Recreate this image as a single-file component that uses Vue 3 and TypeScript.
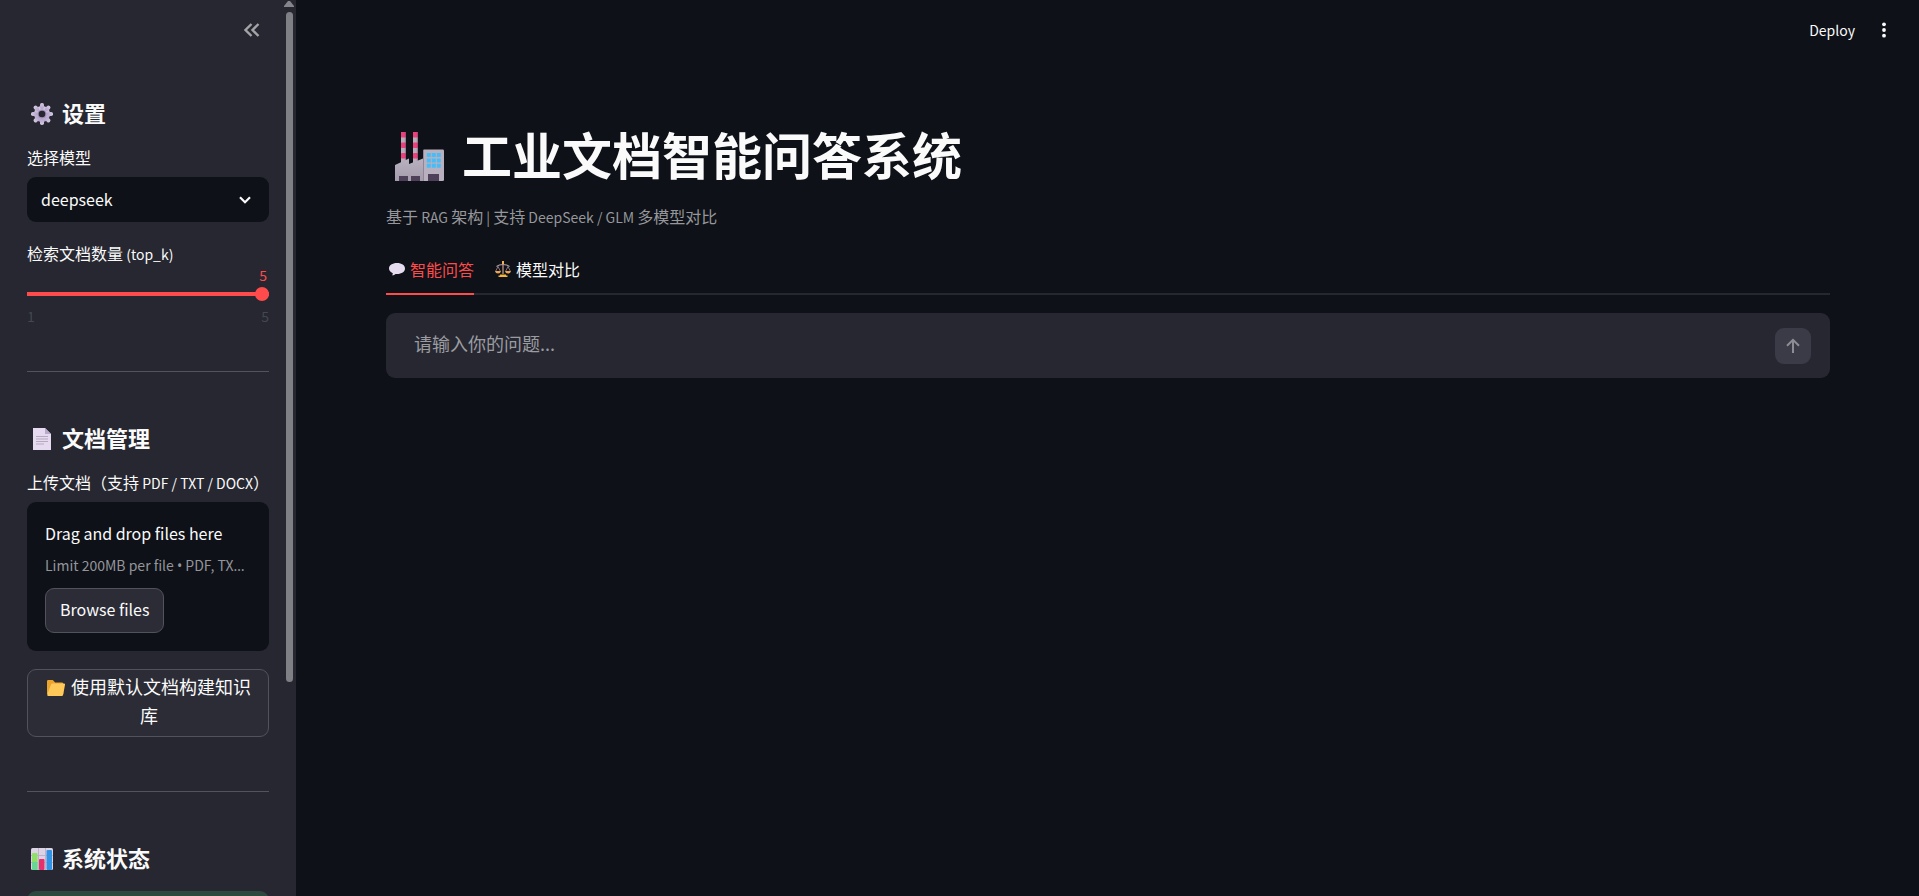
<script setup lang="ts">
import { ref } from 'vue'

const model = ref('deepseek')
const topK = ref(5)
const tab = ref(0)
const question = ref('')
</script>

<template>
  <div class="app">
    <aside class="sidebar">
      <div class="side-head">
        <button class="icon-btn" aria-label="Collapse sidebar">
          <svg width="16" height="14" viewBox="0 0 16 14" fill="none" stroke="#a3a4a8" stroke-width="2.4">
            <path d="M7.5 1 1.5 7l6 6M14.5 1l-6 6 6 6" />
          </svg>
        </button>
      </div>

      <section class="group settings">
        <h2>
          <svg class="emoji" viewBox="0 0 22 22">
            <defs>
              <linearGradient id="gear" x1="0" y1="0" x2="0" y2="1">
                <stop offset="0" stop-color="#d6cbe2" />
                <stop offset="1" stop-color="#b3a2cb" />
              </linearGradient>
            </defs>
            <g fill="url(#gear)">
              <circle cx="11" cy="11" r="8" />
              <rect v-for="a in 8" :key="a" x="9" y="0" width="4" height="6" rx="1.8" :transform="`rotate(${a * 45} 11 11)`" />
            </g>
            <circle cx="11" cy="11" r="4.6" fill="#a191b8" />
            <circle cx="11" cy="11" r="3.3" fill="#262730" />
          </svg>
          <span>设置</span>
        </h2>
        <label for="model">选择模型</label>
        <div class="select-wrap">
          <select id="model" v-model="model">
            <option>deepseek</option>
            <option>glm</option>
          </select>
          <svg class="chevron" width="12" height="8" viewBox="0 0 12 8" fill="none" stroke="#fafafa" stroke-width="2.2">
            <path d="M1 1.2 6 6.2l5-5" />
          </svg>
        </div>
        <label class="topk" for="topk">检索文档数量<span class="latin"> (top_k)</span></label>
        <output class="value" for="topk">{{ topK }}</output>
        <input id="topk" v-model.number="topK" type="range" min="1" max="5" />
        <div class="ticks"><span>1</span><span>5</span></div>
      </section>

      <hr />

      <section class="group">
        <h2>
          <svg class="emoji" viewBox="0 0 22 22">
            <path d="M2 0h12l6 6v16H2z" fill="#e5daf0" />
            <path d="M14 0v6h6z" fill="#b9a9cc" />
            <path d="M5 8.5h12M5 11h12M5 13.5h12M5 16h8" stroke="#b5a9c0" stroke-width="1" />
          </svg>
          <span>文档管理</span>
        </h2>
        <label for="browse">上传文档（支持<span class="latin"> PDF / TXT / DOCX</span>）</label>
        <div class="dropzone">
          <p class="drop-title">Drag and drop files here</p>
          <p class="drop-hint">Limit 200MB per file <span class="mark">•</span> PDF, TX<span class="mark">…</span></p>
          <button id="browse" class="btn browse">Browse files</button>
        </div>
        <button class="btn build">
          <svg class="folder" viewBox="0 0 18 16">
            <path d="M0 1.2Q0 0 1.2 0h4.6l2.4 2.4h6.6q1.4 0 1.4 1.4V14H0z" fill="#eba42c" />
            <path d="M4 4.6Q4.3 3.5 5.5 3.5H17q1.2 0 1 1.2l-1.8 9.8Q16 16 14.6 16H1.2Q0 16 .3 14.6z" fill="#ffc95a" />
          </svg>
          使用默认文档构建知识库
        </button>
      </section>

      <hr />

      <section class="group">
        <h2>
          <svg class="emoji" viewBox="0 0 22 22">
            <rect width="22" height="22" rx="1.5" fill="#dcd4e4" />
            <path d="M0 7.5h22M0 14.5h22M7.5 0v22M14.5 0v22" stroke="#bdb2c9" />
            <rect x="1" y="5" width="5.5" height="17" rx="1" fill="#90df68" />
            <path d="M1 14h5.5v8H1z" fill="#68d796" />
            <rect x="8" y="11" width="5.5" height="11" rx="1" fill="#e5306e" />
            <rect x="15.5" y="2" width="5.5" height="20" rx="1" fill="#3294e5" />
          </svg>
          <span>系统状态</span>
        </h2>
        <div class="status"></div>
      </section>

      <div class="scrollbar" aria-hidden="true">
        <svg width="10" height="6" viewBox="0 0 10 6"><path d="M4 0h2l4 5v1H0V5z" fill="#85868b" /></svg>
        <div class="thumb"></div>
      </div>
    </aside>

    <main class="main">
      <header class="toolbar">
        <button class="deploy">Deploy</button>
        <button class="icon-btn" aria-label="Menu">
          <svg width="4" height="16" viewBox="0 0 4 16" fill="#fafafa">
            <circle cx="2" cy="2.3" r="1.9" /><circle cx="2" cy="8" r="1.9" /><circle cx="2" cy="13.7" r="1.9" />
          </svg>
        </button>
      </header>

      <div class="content">
        <h1>
          <svg class="factory" viewBox="0 0 49 49">
            <defs>
              <linearGradient id="wall" x1="0" y1="0" x2="0" y2="1">
                <stop offset="0" stop-color="#b9b1c0" />
                <stop offset="1" stop-color="#a49cab" />
              </linearGradient>
            </defs>
            <g v-for="x in [6, 18]" :key="x">
              <rect :x="x" y="0" width="5" height="32" rx="1" fill="#b8aebb" />
              <rect v-for="y in [0, 10.5, 21]" :key="y" :x="x" :y="y" width="5" height="5.5" rx=".7" fill="#ef3f7b" />
              <rect :x="x + 3.8" y="0" width="1.2" height="32" fill="#5d405f" opacity=".4" />
            </g>
            <path d="M0 33 14 26.5V32l14-5.500V49H0z" fill="url(#wall)" />
            <rect x="28" y="17.5" width="21" height="31.5" rx="1.2" fill="#b8b0be" />
            <path d="M28.5 18v31" stroke="#8f8798" />
            <template v-for="c in 3" :key="c">
              <rect v-for="r in 3" :key="r" :x="26.8 + c * 5" :y="15.8 + r * 5.3" width="4" height="4" rx=".4" fill="#45bdf8" />
            </template>
            <path d="M4 49v-5h9v5zM16 49v-5h9v5zM33 49v-7h11v7z" fill="#4d4058" />
          </svg>
          <span>工业文档智能问答系统</span>
        </h1>
        <p class="caption">
          基于<span class="latin"> RAG </span>架构<span class="latin"> | </span>支持<span class="latin"> DeepSeek / GLM </span>多模型对比
        </p>

        <div class="tabs" role="tablist">
          <button role="tab" :class="{ active: tab === 0 }" :aria-selected="tab === 0" @click="tab = 0">
            <svg class="tab-emoji" viewBox="0 0 16 16">
              <path d="M8 2c4.7 0 8 2.3 8 5.5S12.7 13 8 13l-1.500-.1C5.500 14 4 14.500 3 14.200c.7-.6.9-1.300.8-2C1.500 11.200 0 9.500 0 7.500 0 4.300 3.300 2 8 2z" fill="#e5dcf0" />
            </svg>
            智能问答
          </button>
          <button role="tab" :class="{ active: tab === 1 }" :aria-selected="tab === 1" @click="tab = 1">
            <svg class="tab-emoji" viewBox="0 0 16 16" fill="none">
              <path d="M8 2v11" stroke="#c9a08a" stroke-width="1.2" />
              <path d="M1.5 5.5Q4 3.5 8 3.5t6.5 2" stroke="#b69a9d" stroke-width="1.2" />
              <path d="M3 5.500.6 10.300M3 5.500l2.400 4.800M13 5.500l-2.400 4.800M13 5.500l2.400 4.800" stroke="#9c8994" stroke-width=".8" />
              <path d="M0 10h6q-.5 2.600-3 2.600T0 10zM10 10h6q-.5 2.600-3 2.600T10 10z" fill="#efa34a" />
              <path d="M7 0h2v3H7z" fill="#f2b24d" />
              <path d="M5 13.500h6v1H5zM3.500 14.500h9V16h-9z" fill="#f5b83c" />
            </svg>
            模型对比
          </button>
        </div>

        <form class="chat" @submit.prevent>
          <input v-model="question" type="text" aria-label="请输入你的问题" placeholder="请输入你的问题..." />
          <button class="send" aria-label="Send">
            <svg width="14" height="15" viewBox="0 0 14 15" fill="none" stroke="#8d8e95" stroke-width="2">
              <path d="M7 15V1.500M1 7.800l6-6 6 6" />
            </svg>
          </button>
        </form>
      </div>
    </main>
  </div>
</template>

<style>
body {
  margin: 0;
  background: #0e1117;
}
</style>

<style scoped>
.app {
  display: flex;
  height: 100vh;
  overflow: hidden;
  color: #fafafa;
  background: #0e1117;
  font-family: "Noto Sans CJK SC", "Noto Sans", sans-serif;
  font-size: 16px;
  line-height: 24px;
}
* {
  box-sizing: border-box;
}
button,
input,
select {
  font: inherit;
  color: inherit;
}
button {
  padding: 0;
  border: 0;
  background: none;
  cursor: pointer;
}
h1,
h2,
p {
  margin: 0;
}
.sidebar {
  position: relative;
  flex: 0 0 296px;
  padding: 0 27px;
  overflow: hidden;
  background: #262730;
}
.side-head {
  display: flex;
  justify-content: flex-end;
  align-items: center;
  height: 60px;
  padding-right: 9px;
}
.icon-btn {
  display: flex;
  align-items: center;
}
.group {
  display: flex;
  flex-direction: column;
}
.settings {
  padding-top: 36px;
}
h2 {
  display: flex;
  align-items: center;
  gap: 9px;
  height: 36px;
  padding-left: 4px;
  margin-bottom: 14px;
  font-size: 22px;
  line-height: 32px;
  font-weight: 700;
}
h2 span {
  padding-bottom: 4px;
}
.emoji {
  width: 22px;
  height: 22px;
}
label {
  height: 24px;
  margin-bottom: 7px;
  line-height: 22px;
  white-space: nowrap;
}
.latin {
  font-size: 14px;
  white-space: pre;
}
.select-wrap {
  position: relative;
  display: grid;
}
select {
  appearance: none;
  height: 45px;
  padding: 0 14px 2px;
  border: 0;
  border-radius: 9px;
  background: #0e1117;
}
.chevron {
  position: absolute;
  right: 18px;
  top: 19px;
  pointer-events: none;
}
.topk {
  margin: 20px 0 0;
}
.value {
  align-self: flex-end;
  height: 20px;
  padding-right: 2px;
  font-size: 14px;
  line-height: 18px;
  color: #ff4b4b;
}
input[type='range'] {
  appearance: none;
  width: 100%;
  height: 14px;
  margin: 1px 0 4px;
  background: linear-gradient(#ff4b4b, #ff4b4b) center / 100% 4px no-repeat;
}
input[type='range']::-webkit-slider-thumb {
  appearance: none;
  width: 14px;
  height: 14px;
  border-radius: 50%;
  background: #ff4b4b;
}
.ticks {
  display: flex;
  justify-content: space-between;
  font-size: 14px;
  line-height: 22px;
  height: 24px;
  color: #454650;
}
hr {
  height: 1px;
  margin: 42px 0 49px;
  border: 0;
  background: #52535c;
}
.dropzone {
  display: flex;
  flex-direction: column;
  align-items: flex-start;
  padding: 18px;
  border-radius: 9px;
  background: #0e1117;
}
.drop-title {
  height: 28px;
  line-height: 26px;
}
.drop-hint {
  height: 24px;
  margin: 5px 0 11px;
  font-size: 14px;
  white-space: nowrap;
  color: #94959a;
}
.mark {
  font-family: "Noto Sans", sans-serif;
}
.btn {
  border: 1px solid #51525b;
  border-radius: 9px;
  background: #2b2c36;
}
.browse {
  height: 45px;
  padding: 0 14px 3px;
}
.build {
  height: 68px;
  margin: 18px 0 12px;
  padding: 0 11px 4px 13px;
  font-size: 18px;
  line-height: 29px;
}
.folder {
  width: 18px;
  height: 16px;
  margin-right: 2px;
  vertical-align: -2px;
}
.status {
  height: 60px;
  border-radius: 9px;
  background: #2b4a3d;
}
.scrollbar {
  position: absolute;
  top: 1px;
  right: 2px;
  display: flex;
  flex-direction: column;
  align-items: center;
  gap: 5px;
  height: 100%;
}
.thumb {
  width: 7px;
  height: calc(75% - 2px);
  border-radius: 4px;
  background: #7f8085;
}
.main {
  flex: 1;
  min-width: 0;
}
.toolbar {
  display: flex;
  justify-content: flex-end;
  align-items: center;
  gap: 27px;
  height: 60px;
  padding-right: 33px;
}
.deploy {
  font-size: 14px;
}
.content {
  padding: 60px 89px 0 90px;
}
h1 {
  display: flex;
  align-items: center;
  gap: 18px;
  height: 72px;
  padding-left: 9px;
  font-size: 50px;
  line-height: 64px;
  font-weight: 700;
}
h1 span {
  padding-bottom: 7px;
}
.factory {
  width: 49px;
  height: 49px;
}
.caption {
  margin: 12px 0 21px;
  color: #96979b;
}
.tabs {
  display: flex;
  gap: 18px;
  border-bottom: 2px solid #262730;
}
.tabs button {
  display: flex;
  align-items: center;
  gap: 5px;
  height: 45px;
  margin-bottom: -2px;
  padding: 0 0 5px 3px;
  border-bottom: 2px solid transparent;
}
.tabs .active {
  color: #ff4b4b;
  border-color: #ff4b4b;
}
.tab-emoji {
  width: 16px;
  height: 16px;
}
.chat {
  display: flex;
  align-items: center;
  height: 65px;
  margin-top: 18px;
  padding: 0 19px 0 28px;
  border-radius: 9px;
  background: #262730;
}
.chat input {
  flex: 1;
  min-width: 0;
  padding: 0 0 5px;
  border: 0;
  outline: 0;
  background: none;
  font-size: 18px;
}
.chat input::placeholder {
  color: #9b9ca1;
}
.send {
  display: grid;
  place-items: center;
  width: 36px;
  height: 36px;
  border-radius: 9px;
  background: #3b3b47;
}
</style>
